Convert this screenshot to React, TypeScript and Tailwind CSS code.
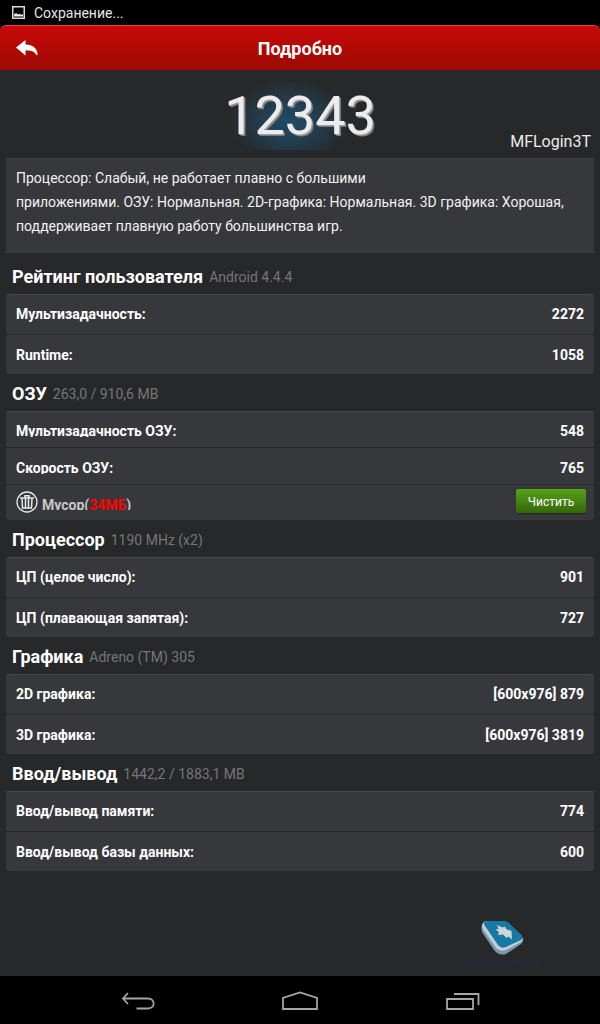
import { clsx } from "clsx";

type Row = { label: string; value: string };

function StatusBar() {
  return (
    <div className="flex h-[25px] items-center gap-[9px] bg-black pl-3 text-sm text-[#e6e6e6]">
      <svg className="h-[13px] w-[13px]" viewBox="0 0 13 13" aria-hidden="true">
        <path d="M.75.75h11.5v11.5H.75z" fill="none" stroke="#dcdcdc" strokeWidth="1.5" />
        <path d="M2 10.5V8.5l2-1.500 2 1.500 1.500-.7 1.500 1 2-.6v2.300z" fill="#f0f0f0" />
      </svg>
      <span>Сохранение...</span>
    </div>
  );
}

function Header() {
  return (
    <header className="bg-black">
      <div className="grid h-[45px] grid-cols-[1fr_auto_1fr] items-center rounded-t-md border-t border-[#d9494b] bg-linear-to-b from-[#c90808] to-[#9c0a04]">
        <button type="button" aria-label="Назад" className="ml-4 h-[17px] w-[22px]">
          <svg viewBox="0 0 22 17" className="h-full w-full" aria-hidden="true">
            <path d="M0 7.5 9.500 0v4.500C17 4.600 21 8.500 21.600 14l-.6 1.500C18.500 11.500 15.500 10.300 9.500 10.500V15.500z" fill="#fff" />
          </svg>
        </button>
        <h1 className="pt-0.5 text-lg font-bold text-white">Подробно</h1>
      </div>
    </header>
  );
}

function Score() {
  return (
    <section className="grid h-[88px] grid-cols-[1fr_auto_1fr] px-2">
      <div className="col-start-2 mt-3 mb-2 bg-[radial-gradient(ellipse_60px_44px_at_43%_58%,#1f4a66,#224257_35%,#272829_100%)] text-[54px] leading-[68px] text-[#ececec] [text-shadow:1px_1px_0_#a0a0a1,2px_2px_0_#77787a]">
        12343
      </div>
      <div className="self-end pr-px pb-1 text-right text-base text-[#ececec]">MFLogin3T</div>
    </section>
  );
}

function SectionTitle({ title, note }: { title: string; note: string }) {
  return (
    <h2 className="flex h-[37px] items-center gap-1.5 pt-0.5 pl-1.5 text-lg font-bold text-white">
      {title}
      <span className="text-sm font-normal text-[#757678]">{note}</span>
    </h2>
  );
}

const card =
  "rounded-[3px] border-t border-[#47484a] bg-[#37383b] text-sm font-bold text-white";

function ResultCard({ rows }: { rows: Row[] }) {
  return (
    <dl className={card}>
      {rows.map(({ label, value }, i) => (
        <div
          key={label}
          className={clsx(
            "flex items-center justify-between px-2.5",
            i === 0 ? "h-[39px] pb-0.5" : "h-10 border-t border-[#28292b]",
          )}
        >
          <dt>{label}</dt>
          <dd>{value}</dd>
        </div>
      ))}
    </dl>
  );
}

function TrashIcon() {
  return (
    <svg className="h-[22px] w-[22px]" viewBox="0 0 22 22" fill="none" stroke="#e8e8e8" aria-hidden="true">
      <circle cx="11" cy="11" r="10" strokeWidth="1.300" />
      <path d="M4 7h14M9 6.500V4.800h4V6.500" strokeWidth="1.600" />
      <path d="M6 7.500 6.500 17h9L16 7.500M9.500 7.500V17M12.500 7.500V17" strokeWidth="1.500" />
    </svg>
  );
}

// Rows here are shorter than the text needs, so descenders are cut at the baseline.
function MemoryCard({ rows }: { rows: Row[] }) {
  return (
    <div className={card}>
      <dl>
        {rows.map(({ label, value }, i) => (
          <div
            key={label}
            className={clsx(
              "flex justify-between px-2.5",
              i === 0 ? "h-[35px] pt-[9px]" : "h-[37px] border-t border-[#28292b] pt-2.5",
            )}
          >
            <dt className="h-4 overflow-hidden leading-5">{label}</dt>
            <dd className="leading-5">{value}</dd>
          </div>
        ))}
      </dl>
      <div className="flex h-9 justify-between border-t border-[#28292b] pr-2 pl-2.5">
        <div className="flex gap-1 pt-1.5 text-[#c8c8c9]">
          <TrashIcon />
          <span className="mt-1 h-[15px] overflow-hidden leading-5">
            Мусор(<span className="text-[#f00]">34МБ</span>)
          </span>
        </div>
        <button
          type="button"
          className="mt-1 h-6 w-[70px] rounded-xs bg-linear-to-b from-[#56a41a] to-[#356609] pt-0.5 text-xs font-normal text-white shadow-[0_1px_1px_#242526]"
        >
          Чистить
        </button>
      </div>
    </div>
  );
}

function Watermark() {
  return (
    <div className="mt-auto mr-[62px] flex flex-col items-center self-end pb-2">
      <svg className="ml-1.5 h-9 w-11" viewBox="0 0 44 36" aria-hidden="true">
        <path d="M1 5Q0 8 1 12L13 30Q18 36 25 34L40 24Q43 22 42 18z" fill="#7897ad" />
        <path d="M2 3Q0 6 2 9L15 28Q19 32 25 30L40 22Q43 19 40 15L28 4Q25 1 21 1H6Q3 1 2 3z" fill="#c5cdd1" />
        <path d="M4 1.500Q2 3 4 6L17 25Q20 29 25 27L40 20Q43 18 40 15L28 3Q25 1 22 1H7z" fill="#1679a3" />
        <path d="M16 5 21.500 7.500 24 6.500 25 9 30.500 11 31 19.500 27.500 16.500 25.500 18 22 14.500 17 15 18 12 14.500 9.500 17.500 9z" fill="#cfd4d5" />
      </svg>
      <span className="text-[9px] leading-3 text-[#262950]">mobile-review.com</span>
    </div>
  );
}

function NavBar() {
  return (
    <nav className="flex h-12 items-center justify-center gap-[127px] bg-black pt-0.5" aria-label="Система">
      <button type="button" aria-label="Назад" className="h-5 w-9">
        <svg viewBox="0 0 36 20" className="h-full w-full" fill="none" stroke="#a5a5a5" strokeWidth="1.800">
          <path d="M9 2 4 7.500l5 5.500M4 7.500h25c7.500 0 7.500 10 0 10H17.500" />
        </svg>
      </button>
      <button type="button" aria-label="Домой" className="h-5 w-9">
        <svg viewBox="0 0 36 20" className="h-full w-full" fill="none" stroke="#a5a5a5" strokeWidth="1.800">
          <path d="M1 18V7L18 1.500l17 5.500V18z" />
        </svg>
      </button>
      <button type="button" aria-label="Недавние" className="h-5 w-9">
        <svg viewBox="0 0 36 20" className="h-full w-full" fill="none" stroke="#a5a5a5" strokeWidth="1.800">
          <path d="M2 8h26v10H2zM9 3h24.500v11" />
        </svg>
      </button>
    </nav>
  );
}

export default function App() {
  return (
    <div className="flex min-h-screen flex-col bg-[#272829] font-[Roboto,sans-serif]">
      <StatusBar />
      <Header />
      <Score />
      <main className="px-1.5">
        <p className="mb-1 border-t border-[#414244] bg-[#37383b] px-2.5 pt-[7px] pb-[15px] text-sm leading-6 text-[#f2f2f2]">
          Процессор: Слабый, не работает плавно с большими
          <br />
          приложениями. ОЗУ: Нормальная. 2D-графика: Нормальная. 3D графика: Хорошая,
          поддерживает плавную работу большинства игр.
        </p>
        <SectionTitle title="Рейтинг пользователя" note="Android 4.4.4" />
        <ResultCard
          rows={[
            { label: "Мультизадачность:", value: "2272" },
            { label: "Runtime:", value: "1058" },
          ]}
        />
        <SectionTitle title="ОЗУ" note="263,0 / 910,6 MB" />
        <MemoryCard
          rows={[
            { label: "Мультизадачность ОЗУ:", value: "548" },
            { label: "Скорость ОЗУ:", value: "765" },
          ]}
        />
        <SectionTitle title="Процессор" note="1190 MHz (x2)" />
        <ResultCard
          rows={[
            { label: "ЦП (целое число):", value: "901" },
            { label: "ЦП (плавающая запятая):", value: "727" },
          ]}
        />
        <SectionTitle title="Графика" note="Adreno (TM) 305" />
        <ResultCard
          rows={[
            { label: "2D графика:", value: "[600x976] 879" },
            { label: "3D графика:", value: "[600x976] 3819" },
          ]}
        />
        <SectionTitle title="Ввод/вывод" note="1442,2 / 1883,1 MB" />
        <ResultCard
          rows={[
            { label: "Ввод/вывод памяти:", value: "774" },
            { label: "Ввод/вывод базы данных:", value: "600" },
          ]}
        />
      </main>
      <Watermark />
      <NavBar />
    </div>
  );
}
